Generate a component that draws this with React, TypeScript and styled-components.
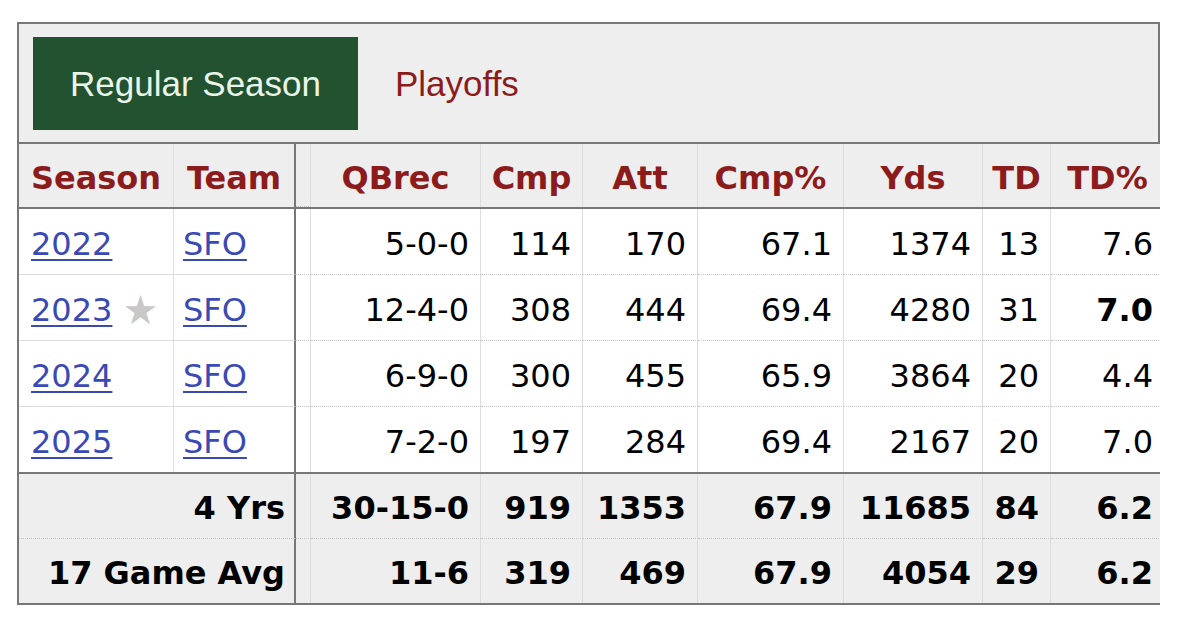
import React from 'react'
import styled, { createGlobalStyle } from 'styled-components'

const GlobalStyle = createGlobalStyle`
  body {
    margin: 0;
    background: #fff;
  }
`

const COLS = '155px 122px 15px 170px 102px 115px 146px 139px 68px 114px'

type Line = {
    season: string
    star?: boolean
    team: string
    stats: string[]
    lead?: number
}

const lines: Line[] = [
    { season: '2022', team: 'SFO', stats: ['5-0-0', '114', '170', '67.1', '1374', '13', '7.6'] },
    { season: '2023', star: true, team: 'SFO', stats: ['12-4-0', '308', '444', '69.4', '4280', '31', '7.0'], lead: 6 },
    { season: '2024', team: 'SFO', stats: ['6-9-0', '300', '455', '65.9', '3864', '20', '4.4'] },
    { season: '2025', team: 'SFO', stats: ['7-2-0', '197', '284', '69.4', '2167', '20', '7.0'] },
]

const totals = [
    { label: '4 Yrs', stats: ['30-15-0', '919', '1353', '67.9', '11685', '84', '6.2'] },
    { label: '17 Game Avg', stats: ['11-6', '319', '469', '67.9', '4054', '29', '6.2'] },
]

const heads = ['QBrec', 'Cmp', 'Att', 'Cmp%', 'Yds', 'TD', 'TD%']

export default function App() {
    return (
        <>
            <GlobalStyle />
            <Page>
                <Frame>
                    <TabBar>
                        <Tab $active>Regular Season</Tab>
                        <Tab>Playoffs</Tab>
                    </TabBar>
                    <Table>
                        <Head>
                            <Row $h={63}>
                                <HeadCell>Season</HeadCell>
                                <HeadCell $edge>Team</HeadCell>
                                <Spacer />
                                {heads.map((h) => <HeadCell key={h}>{h}</HeadCell>)}
                            </Row>
                        </Head>
                        <Body>
                            {lines.map((l, i) => {
                                const last = i === lines.length - 1
                                return (
                                    <Row key={l.season} $h={last ? 65 : 66}>
                                        <Cell $align='left' $pad={12} $frozen $last={last}>
                                            <Link href='#'>{l.season}</Link>
                                            {l.star && <Star>★</Star>}
                                        </Cell>
                                        <Cell $align='left' $pad={9} $frozen $edge $last={last}>
                                            <Link href='#'>{l.team}</Link>
                                        </Cell>
                                        <Spacer $last={last} />
                                        {l.stats.map((s, j) => (
                                            <Cell key={j} $align='right' $pad={11} $last={last} $bold={l.lead === j}>
                                                {s}
                                            </Cell>
                                        ))}
                                    </Row>
                                )
                            })}
                        </Body>
                        <Foot>
                            {totals.map((t, i) => {
                                const last = i === totals.length - 1
                                return (
                                    <Row key={t.label} $h={last ? 64 : 65}>
                                        <SumLabel $last={last}>{t.label}</SumLabel>
                                        <Spacer $last={last} />
                                        {t.stats.map((s, j) => (
                                            <Cell key={j} $align='right' $pad={11} $bold $last={last}>
                                                {s}
                                            </Cell>
                                        ))}
                                    </Row>
                                )
                            })}
                        </Foot>
                    </Table>
                </Frame>
            </Page>
        </>
    )
}

const Page = styled.div`
    padding: 22px 0 0 17px;
`

const Frame = styled.div`
    width: 1143px;
    overflow: hidden;
`

const TabBar = styled.div`
    display: flex;
    align-items: center;
    box-sizing: border-box;
    height: 120px;
    padding: 13px 0 12px 14px;
    background: #eee;
    border: 2px solid #777;
    border-bottom: none;
`

const Tab = styled.div<{ $active?: boolean }>`
    display: flex;
    align-items: center;
    height: 93px;
    padding: 0 37px;
    font-family: 'Liberation Sans', Arial, sans-serif;
    font-size: 35px;
    color: ${(p) => (p.$active ? '#eaf5ea' : '#8c1c1c')};
    background: ${(p) => (p.$active ? '#22522f' : 'transparent')};
`

const Table = styled.div`
    border-left: 2px solid #777;
    font-family: 'DejaVu Sans', Verdana, sans-serif;
    font-size: 32px;
    color: #000;
`

const Head = styled.div`
    background: #eee;
    border-top: 2px solid #777;
    border-bottom: 2px solid #777;
`

const Body = styled.div`
    background: #fff;
`

const Foot = styled.div`
    background: #eee;
    border-top: 2px solid #777;
    border-bottom: 2px solid #777;
`

const Row = styled.div<{ $h: number }>`
    display: grid;
    grid-template-columns: ${COLS};
    height: ${(p) => p.$h}px;
`

const Cell = styled.div<{ $align: 'left' | 'right'; $pad: number; $frozen?: boolean; $edge?: boolean; $last?: boolean; $bold?: boolean }>`
    box-sizing: border-box;
    display: flex;
    align-items: center;
    padding-top: 4px;
    white-space: nowrap;
    justify-content: ${(p) => (p.$align === 'left' ? 'flex-start' : 'flex-end')};
    ${(p) => (p.$align === 'left' ? `padding-left: ${p.$pad}px;` : `padding-right: ${p.$pad}px;`)}
    font-weight: ${(p) => (p.$bold ? 700 : 400)};
    border-right: ${(p) => (p.$edge ? '2px solid #777' : '1px solid #ddd')};
    border-bottom: ${(p) => (p.$last ? 'none' : p.$frozen ? '1px solid #ddd' : '1px dotted #c4c4c4')};
`

const HeadCell = styled.div<{ $edge?: boolean }>`
    box-sizing: border-box;
    display: flex;
    align-items: center;
    justify-content: center;
    padding-top: 4px;
    font-weight: 700;
    color: #8c1c1c;
    white-space: nowrap;
    border-right: ${(p) => (p.$edge ? '2px solid #777' : '1px solid #ddd')};
`

const SumLabel = styled.div<{ $last?: boolean }>`
    grid-column: span 2;
    box-sizing: border-box;
    display: flex;
    align-items: center;
    justify-content: flex-end;
    padding: 4px 9px 0 0;
    font-weight: 700;
    white-space: nowrap;
    border-right: 2px solid #777;
    border-bottom: ${(p) => (p.$last ? 'none' : '1px dotted #c4c4c4')};
`

const Spacer = styled.div<{ $last?: boolean }>`
    box-sizing: border-box;
    border-right: 1px solid #ddd;
    border-bottom: ${(p) => (p.$last ? 'none' : '1px dotted #c4c4c4')};
`

const Link = styled.a`
    color: #3a49b4;
    text-decoration: underline;
    text-decoration-thickness: 2px;
    text-underline-offset: 4px;
`

const Star = styled.span`
    margin-left: 10px;
    color: #c8c8c8;
    font-size: 40px;
    line-height: 1;
`
